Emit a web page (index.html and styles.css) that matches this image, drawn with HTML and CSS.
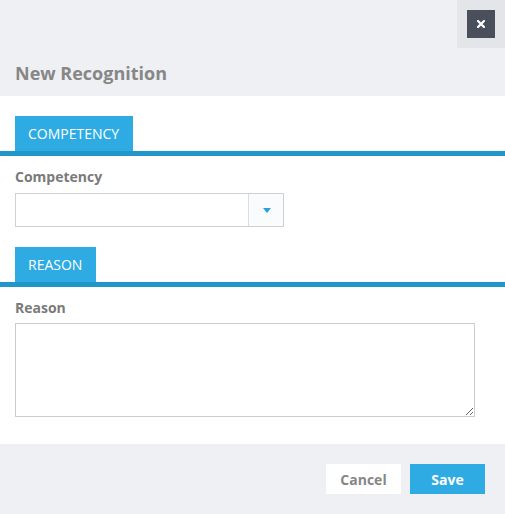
FILE: index.html
```html
<!DOCTYPE html>
<html>
<head>
<meta charset="utf-8">
<link rel="stylesheet" href="styles.css">
</head>
<body>
<div class="modal">
  <div class="header">
    <div class="close-area">
      <button class="close-btn" aria-label="Close">
        <svg width="8" height="8" viewBox="0 0 8 8"><path d="M1 1 L7 7 M7 1 L1 7" stroke="#ffffff" stroke-width="2.2" stroke-linecap="square"/></svg>
      </button>
    </div>
    <h1 class="title">New Recognition</h1>
  </div>
  <div class="body">
    <div class="tab-row"><span class="tab">COMPETENCY</span></div>
    <div class="field">
      <label class="label">Competency</label>
      <div class="select">
        <div class="select-value"></div>
        <div class="select-btn"><span class="caret"></span></div>
      </div>
    </div>
    <div class="tab-row"><span class="tab">REASON</span></div>
    <div class="field">
      <label class="label">Reason</label>
      <textarea class="textarea"></textarea>
    </div>
  </div>
  <div class="footer">
    <button class="btn btn-cancel">Cancel</button>
    <button class="btn btn-save">Save</button>
  </div>
</div>
</body>
</html>
```
FILE: styles.css
```css
* { box-sizing: border-box; }
html, body { margin: 0; padding: 0; background: #ffffff; }
body { font-family: "Open Sans", "Liberation Sans", sans-serif; }
.modal { width: 505px; height: 514px; display: flex; flex-direction: column; }
.header { position: relative; background: #eff0f4; height: 96px; padding: 61px 15px 0; }
.close-area { position: absolute; top: 0; right: 0; width: 48px; height: 48px; background: #e3e5e9; padding: 10px; }
.close-btn { width: 28px; height: 28px; border: 0; margin: 0; padding: 0; background: #4a505b; display: flex; align-items: center; justify-content: center; }
.close-btn svg { display: block; }
.title { margin: 0; font-size: 18px; font-weight: 700; color: #878787; line-height: 25px; }
.body { background: #ffffff; padding: 20px 0 0; height: 348px; }
.tab-row { border-bottom: 5px solid #2196c8; padding-left: 15px; display: flex; }
.tab { background: #2eabe2; color: #ffffff; font-size: 14px; line-height: 19px; padding: 8px 14px 8px 13px; height: 35px; }
.field { padding: 11px 15px 0; display: flex; flex-direction: column; }
.label { font-size: 14px; font-weight: 700; color: #7a7a7a; line-height: 19px; margin-bottom: 7px; }
.select { width: 269px; height: 34px; border: 1px solid #cfd0d2; display: flex; margin-bottom: 20px; }
.select-value { flex: 1; }
.select-btn { width: 35px; border-left: 1px solid #dcdde0; background: #fafbfd; display: flex; align-items: center; justify-content: center; }
.caret { width: 0; height: 0; border-left: 4px solid transparent; border-right: 4px solid transparent; border-top: 5px solid #2a9fd9; margin-left: 1px; }
.textarea { width: 460px; height: 94px; border: 1px solid #cccccc; margin: 0; margin-top: -1px; padding: 4px; font-family: inherit; resize: both; }
.footer { background: #eff0f4; flex: 1; padding: 20px 20px 0; display: flex; justify-content: flex-end; gap: 9px; align-items: flex-start; }
.btn { width: 75px; height: 30px; border: 0; margin: 0; font-family: "Open Sans", "Liberation Sans", sans-serif; font-size: 14px; font-weight: 700; padding: 0; }
.btn-cancel { background: #ffffff; color: #868686; }
.btn-save { background: #2eabe2; color: #ffffff; }
```
